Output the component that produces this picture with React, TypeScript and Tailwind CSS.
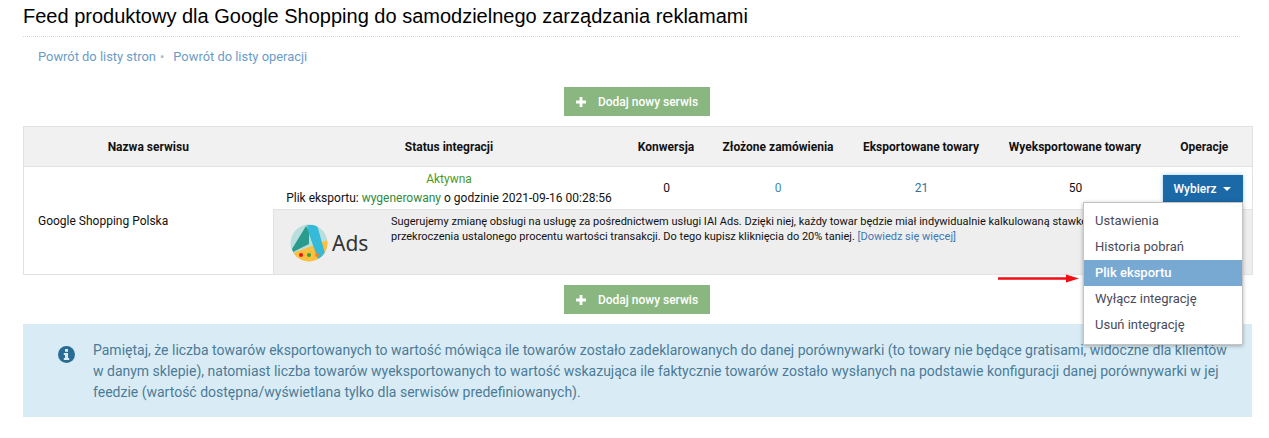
import React from "react";

const Add = () => (
  <div className="flex w-[1228px] justify-center">
    <button className="flex h-[29px] w-[146px] items-center justify-center gap-[11px] bg-[#8ab77f] text-[12px] font-medium text-white">
      <svg width="10" height="10" viewBox="0 0 10 10" className="mr-[1px]"><path d="M3.6 0h2.8v3.6H10v2.8H6.4V10H3.6V6.4H0V3.6h3.6z" fill="#fff" /></svg>
      <span>Dodaj nowy serwis</span>
    </button>
  </div>
);

const Logo = () => (
  <svg width="38" height="38" viewBox="0 0 38 38">
    <defs><clipPath id="c"><circle cx="19" cy="19" r="18.5" /></clipPath></defs>
    <circle cx="19" cy="19" r="18.5" fill="#b9dedb" />
    <g clipPath="url(#c)">
      <path d="M3 29 L38 16 L38 30 L30 38 L10 38 Z" fill="#fdbf3c" />
      <path d="M16 2 L19 7 L19 20 L3 28 L2 25 Z" fill="#2a9b8c" />
      <path d="M17 1 L27 1 L36 33 L29 38 L19 10 Z" fill="#35bad8" />
    </g>
    <circle cx="11" cy="31" r="2" fill="#e8141c" />
    <circle cx="19" cy="31" r="2" fill="#2fa33a" />
    <circle cx="27" cy="31" r="2" fill="#e9872c" />
  </svg>
);

const th = "border-b border-[#e2e2e2] pr-[1px] text-center font-bold";

export default function App() {
  return (
    <div className="relative h-[438px] w-[1269px] overflow-hidden bg-white font-['Roboto',sans-serif] text-[12px] text-[#111]">
      <div className="pl-[23px] pr-[17px]">
        <div className="mr-[12px] h-[37px] border-b border-dotted border-[#d8d8d8] pt-[3px] font-['Liberation_Sans',sans-serif] text-[20px] leading-[26px] text-black">
          Feed produktowy dla Google Shopping do samodzielnego zarządzania reklamami
        </div>
        <div className="flex h-[38px] items-center pl-[15px] pt-[1px] text-[12.9px] text-[#6a9cc9]">
          <span>Powrót do listy stron</span>
          <span className="ml-[4px] mr-[9px] text-[#a9b8c6]">•</span>
          <span>Powrót do listy operacji</span>
        </div>
        <div className="pt-[12px]"><Add /></div>
        <table className="mt-[10px] w-[1229px] table-fixed border-collapse border border-[#e2e2e2]">
          <colgroup>
            <col className="w-[250px]" />
            <col className="w-[352px]" />
            <col className="w-[82px]" />
            <col className="w-[142px]" />
            <col className="w-[144px]" />
            <col className="w-[164px]" />
            <col className="w-[95px]" />
          </colgroup>
          <thead>
            <tr className="h-[40px] bg-[#f1f1f1]">
              <th className={th}>Nazwa serwisu</th>
              <th className={th}>Status integracji</th>
              <th className={th}>Konwersja</th>
              <th className={th}>Złożone zamówienia</th>
              <th className={th}>Eksportowane towary</th>
              <th className={th}>Wyeksportowane towary</th>
              <th className={th}>Operacje</th>
            </tr>
          </thead>
          <tbody>
            <tr className="h-[43px]">
              <td rowSpan={2} className="pl-[14px] align-middle">Google Shopping Polska</td>
              <td className="pr-[1px] pt-[1px] text-center leading-[18.5px]">
                <div className="text-[#4b9a1f]">Aktywna</div>
                <div>Plik eksportu: <span className="text-[#2d8a3e]">wygenerowany</span> o godzinie 2021-09-16 00:28:56</div>
              </td>
              <td className="pb-[1px] text-center">0</td>
              <td className="pb-[1px] pr-[1px] text-center text-[#3f8aa0]">0</td>
              <td className="pb-[1px] text-center text-[#2f6f9f]">21</td>
              <td className="pb-[1px] text-center">50</td>
              <td className="pl-[5px] pt-[1px]">
                <div className="flex h-[27px] w-[80px] items-center justify-center gap-[7px] bg-[#1c69a8] font-medium text-white shadow-[0_0_4px_rgba(90,170,220,0.6)]">
                  Wybierz
                  <span className="h-0 w-0 border-x-[4px] border-t-[4px] border-x-transparent border-t-white" />
                </div>
              </td>
            </tr>
            <tr className="h-[65px]">
              <td colSpan={6} className="border-t border-l border-[#e2e2e2] bg-[#eeeeee] align-top">
                <div className="flex">
                  <div className="flex w-[117px] shrink-0 items-center pl-[16px] pt-[14px]">
                    <Logo />
                    <span className="ml-[4px] font-['Noto_Sans',sans-serif] text-[21px] leading-[30px] text-[#333]">Ads</span>
                  </div>
                  <div className="pt-[4px] text-[11px] leading-[15px] whitespace-nowrap">
                    <div>Sugerujemy zmianę obsługi na usługę za pośrednictwem usługi IAI Ads. Dzięki niej, każdy towar będzie miał indywidualnie kalkulowaną stawkę</div>
                    <div>przekroczenia ustalonego procentu wartości transakcji. Do tego kupisz kliknięcia do 20% taniej. <span className="text-[#3f77b5]">[Dowiedz się więcej]</span></div>
                  </div>
                </div>
              </td>
            </tr>
          </tbody>
        </table>
        <div className="pt-[10px]"><Add /></div>
        <div className="mt-[10px] flex h-[93px] w-[1229px] bg-[#d9ecf5] pl-[35px] pt-[16px] text-[14px] leading-[21px] text-[#4c7a97]">
          <svg width="17" height="17" viewBox="0 0 17 17" className="mt-[6px] shrink-0">
            <circle cx="8.5" cy="8.5" r="8.5" fill="#2a6c94" />
            <rect x="7" y="3" width="3" height="2.8" fill="#d9ecf5" />
            <path d="M5.8 7h4.2v5h1.2v2H5.8v-2H7V9H5.8z" fill="#d9ecf5" />
          </svg>
          <div className="ml-[18px] w-[1140px]">
            Pamiętaj, że liczba towarów eksportowanych to wartość mówiąca ile towarów zostało zadeklarowanych do danej porównywarki (to towary nie będące gratisami, widoczne dla klientów w danym sklepie), natomiast liczba towarów wyeksportowanych to wartość wskazująca ile faktycznie towarów zostało wysłanych na podstawie konfiguracji danej porównywarki w jej feedzie (wartość dostępna/wyświetlana tylko dla serwisów predefiniowanych).
          </div>
        </div>
      </div>

      <div className="absolute left-[1083px] top-[202px] w-[160px] border border-[#c4c4c4] bg-white pb-[6px] pt-[5px] text-[13px] text-[#4a4a5a] shadow-[0_1px_4px_rgba(0,0,0,0.3)]">
        {["Ustawienia", "Historia pobrań", "Plik eksportu", "Wyłącz integrację", "Usuń integrację"].map((t, i) => (
          <div key={t} className={"flex h-[26px] items-center pl-[11px] " + (i === 2 ? "bg-[#78a9d3] font-medium text-white" : "")}>{t}</div>
        ))}
      </div>
      <svg width="82" height="12" viewBox="0 0 82 12" className="absolute left-[998px] top-[273px]">
        <path d="M0 4.3h68V1.5L81 5.5 68 9.5V6.7H0z" fill="#f30d14" />
      </svg>
    </div>
  );
}
